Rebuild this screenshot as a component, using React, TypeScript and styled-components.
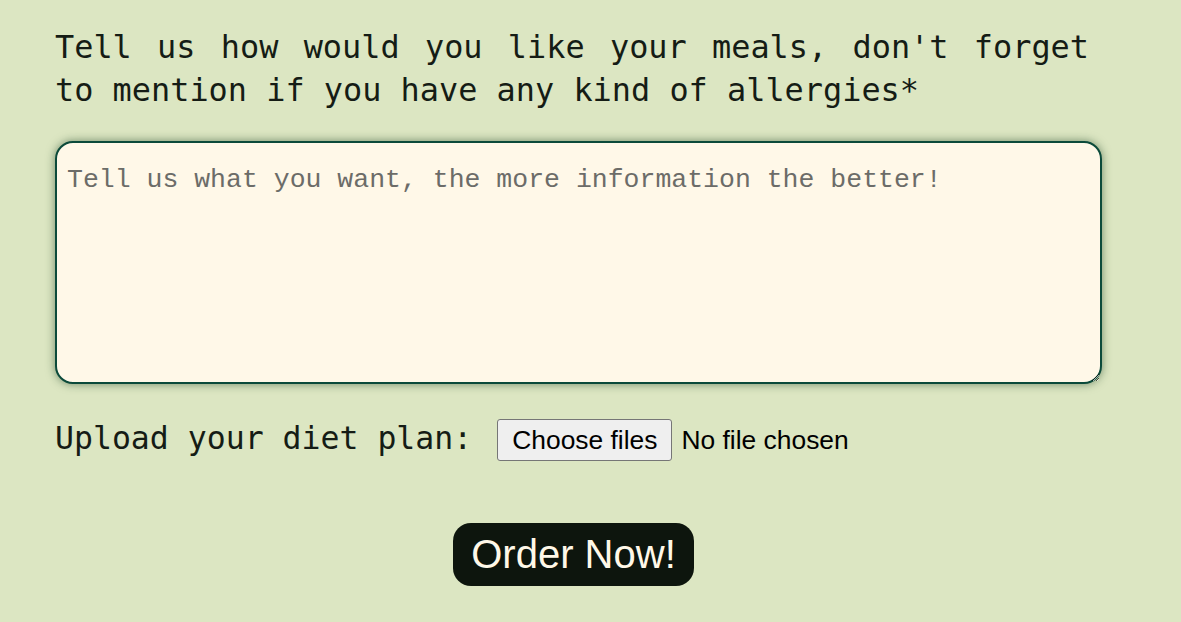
import React from "react";
import styled, { createGlobalStyle } from "styled-components";

const Global = createGlobalStyle`
  html, body { margin: 0; padding: 0; background: #dce6c2; }
  body { width: 1181px; height: 622px; overflow: hidden; }
`;

const Page = styled.div`
  padding: 26px 0 0 55px;
  width: 1047px;
  display: flex;
  flex-direction: column;
`;

const Heading = styled.label`
  display: block;
  width: 1034px;
  font-family: "DejaVu Sans Mono", "Liberation Mono", monospace;
  font-size: 31.9px;
  line-height: 43px;
  color: #151c15;
  font-weight: 400;
`;

const HeadingLine = styled.span<{ $justify?: boolean }>`
  display: block;
  text-align: ${(p) => (p.$justify ? "justify" : "left")};
  text-align-last: ${(p) => (p.$justify ? "justify" : "auto")};
`;

const TextArea = styled.textarea`
  margin-top: 29px;
  box-sizing: border-box;
  width: 1047px;
  height: 243px;
  border: 2px solid #0b4a3a;
  border-radius: 18px;
  background: #fff8e8;
  box-shadow: 0 0 10px rgba(20, 60, 30, 0.55);
  padding: 22px 10px;
  font-family: "Liberation Mono", monospace;
  font-size: 26.5px;
  font-weight: 400;
  color: #333;
  outline: none;
  &::placeholder {
    color: #6c6c68;
  }
`;

const UploadRow = styled.div`
  margin-top: 31px;
  display: flex;
  align-items: center;
`;

const UploadLabel = styled.span`
  font-family: "DejaVu Sans Mono", "Liberation Mono", monospace;
  font-size: 31.5px;
  color: #151c15;
  margin-right: 25px;
`;

const HiddenInput = styled.input`
  display: none;
`;

const FileButton = styled.label`
  box-sizing: border-box;
  height: 42px;
  margin-top: 4px;
  padding: 0 14px;
  display: inline-flex;
  align-items: center;
  background: #efefef;
  border: 1px solid #767676;
  border-radius: 3px;
  font-family: "Liberation Sans", Arial, sans-serif;
  font-size: 26.4px;
  color: #000;
  cursor: pointer;
`;

const FileStatus = styled.span`
  margin-left: 9px;
  margin-top: 4px;
  font-family: "Liberation Sans", Arial, sans-serif;
  font-size: 26.4px;
  color: #000;
`;

const SubmitRow = styled.div`
  margin-top: 62px;
  display: flex;
  justify-content: center;
  width: 1037px;
`;

const OrderButton = styled.button`
  box-sizing: border-box;
  height: 63px;
  padding: 0 18px;
  background: #0d150d;
  color: #fff8e8;
  border: none;
  border-radius: 18px;
  font-family: "Liberation Sans", Arial, sans-serif;
  font-size: 40px;
  cursor: pointer;
`;

export default function App() {
  return (
    <>
      <Global />
      <Page>
        <Heading htmlFor="meals">
          <HeadingLine $justify>
            Tell us how would you like your meals, don't forget
          </HeadingLine>
          <HeadingLine>to mention if you have any kind of allergies*</HeadingLine>
        </Heading>
        <TextArea
          id="meals"
          placeholder="Tell us what you want, the more information the better!"
        />
        <UploadRow>
          <UploadLabel>Upload your diet plan:</UploadLabel>
          <FileButton htmlFor="diet">Choose files</FileButton>
          <HiddenInput id="diet" type="file" multiple />
          <FileStatus>No file chosen</FileStatus>
        </UploadRow>
        <SubmitRow>
          <OrderButton type="submit">Order Now!</OrderButton>
        </SubmitRow>
      </Page>
    </>
  );
}
